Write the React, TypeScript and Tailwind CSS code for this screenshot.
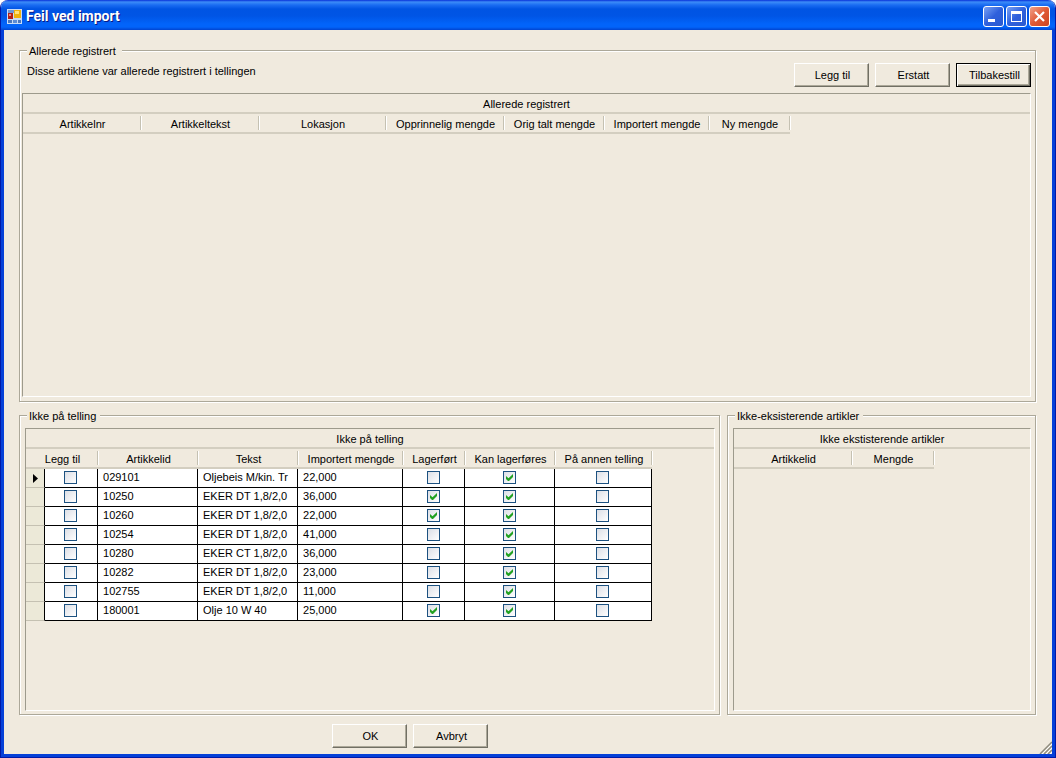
import type { ReactNode } from "react";

type Row = {
  id: string;
  tekst: string;
  mengde: string;
  lagerfort: boolean;
};

const rows: Row[] = [
  { id: "029101", tekst: "Oljebeis M/kin. Tr", mengde: "22,000", lagerfort: false },
  { id: "10250", tekst: "EKER DT 1,8/2,0", mengde: "36,000", lagerfort: true },
  { id: "10260", tekst: "EKER DT 1,8/2,0", mengde: "22,000", lagerfort: true },
  { id: "10254", tekst: "EKER DT 1,8/2,0", mengde: "41,000", lagerfort: false },
  { id: "10280", tekst: "EKER CT 1,8/2,0", mengde: "36,000", lagerfort: false },
  { id: "10282", tekst: "EKER DT 1,8/2,0", mengde: "23,000", lagerfort: false },
  { id: "102755", tekst: "EKER DT 1,8/2,0", mengde: "11,000", lagerfort: false },
  { id: "180001", tekst: "Olje 10 W 40", mengde: "25,000", lagerfort: true },
];

const Button = ({ children, focused = false }: { children: ReactNode; focused?: boolean }) => (
  <button
    type="button"
    className={
      focused
        ? "w-[75px] h-6 pl-0.5 border border-black text-center shadow-[inset_1px_1px_0_#fff,inset_-1px_-1px_0_#716f64,inset_-2px_-2px_0_#aca899]"
        : "w-[75px] h-6 pl-0.5 border border-t-white border-l-white border-r-[#716f64] border-b-[#716f64] text-center shadow-[inset_-1px_-1px_0_#aca899]"
    }
  >
    {children}
  </button>
);

const Group = ({ title, legendClass = "", className, children }: { title: string; legendClass?: string; className: string; children: ReactNode }) => (
  <fieldset className={`min-w-0 border border-[#aca899] shadow-[1px_1px_0_#fff,inset_1px_1px_0_#fff] ${className}`}>
    <legend className={`h-[15px] pt-0.5 leading-[13px] bg-[#f0eade] pl-0.5 pr-1 ${legendClass}`}>{title}</legend>
    {children}
  </fieldset>
);

const Grid = ({ title, className, children }: { title: string; className: string; children: ReactNode }) => (
  <div className={`overflow-hidden border border-t-[#9d9a8c] border-l-[#9d9a8c] border-r-white border-b-white ${className}`}>
    <div className="h-5 leading-5 text-center border-b-2 border-[#d3cec0]">{title}</div>
    {children}
  </div>
);

const Head = ({ children, span = 1 }: { children: ReactNode; span?: number }) => (
  <th colSpan={span} scope="col" className="h-5 p-0 font-normal border-b-2 border-[#d3cec0]">
    <div className="h-[14px] pl-0.5 leading-4 whitespace-nowrap border-r border-[#c5c1b2] shadow-[1px_0_0_#fff]">
      {children}
    </div>
  </th>
);

const Check = ({ label, checked = false }: { label: string; checked?: boolean }) => (
  <td className="h-[19px] p-0 pb-0.5 pr-px bg-white border-r border-b border-black">
    <label className="grid w-[13px] h-[13px] mx-auto">
      <input
        type="checkbox"
        defaultChecked={checked}
        aria-label={label}
        className="peer [grid-area:1/1] appearance-none w-[13px] h-[13px] border border-[#1c5180] bg-linear-to-br from-[#dcdfe6] to-white"
      />
      <svg viewBox="0 0 13 13" className="invisible peer-checked:visible pointer-events-none z-10 [grid-area:1/1] w-[13px] h-[13px]">
        <path d="M3 5v3l2 2h1l4-4V3L5.500 7.300z" fill="#21a121" />
      </svg>
    </label>
  </td>
);

const TextCell = ({ children }: { children: ReactNode }) => (
  <td className="h-[19px] p-0 pl-[5px] pb-0.5 leading-4 whitespace-nowrap overflow-hidden bg-white border-r border-b border-black">
    {children}
  </td>
);

const TitleBar = () => (
  <header className="h-[30px] pl-1.5 pr-[5px] pt-0.5 flex items-center bg-[linear-gradient(#0831d9_0px,#3c8cf8_2px,#1a6cf2_5px,#0054e3_9px,#0055e5_16px,#0264fa_24px,#0264fa_27px,#0144d0_30px)]">
    <svg viewBox="0 0 15 15" className="w-[15px] h-[15px]" aria-hidden="true">
      <rect x="0" y="0" width="15" height="15" fill="#c9dcf5" />
      <rect x="1" y="1" width="6" height="3" fill="#6f97d4" />
      <rect x="1" y="4" width="5" height="6" fill="#b31f17" />
      <rect x="2" y="5" width="2" height="2" fill="#ec8d79" />
      <rect x="7" y="1" width="7" height="8" fill="#f0b30d" />
      <rect x="8" y="2" width="4" height="3" fill="#ffe27c" />
      <rect x="1" y="11" width="4" height="3" fill="#4b77be" />
      <rect x="6" y="11" width="4" height="3" fill="#5c8cd4" />
      <rect x="11" y="11" width="3" height="3" fill="#4b77be" />
    </svg>
    <h1 className="ml-1 flex-1 font-['Roboto',sans-serif] text-[14px] leading-4 font-bold text-white [text-shadow:1px_1px_0_#0a1883]">
      Feil ved import
    </h1>
    <div className="flex gap-0.5">
      <button type="button" aria-label="Minimer" className="w-[21px] h-[21px] rounded-[3px] border border-white bg-linear-to-br from-[#7aa0f3] via-[#2f60dc] to-[#2a5ad0]">
        <svg viewBox="0 0 19 19" className="w-[19px] h-[19px]">
          <path d="M4 12h7v3H4z" fill="#fff" />
        </svg>
      </button>
      <button type="button" aria-label="Maksimer" className="w-[21px] h-[21px] rounded-[3px] border border-white bg-linear-to-br from-[#7aa0f3] via-[#2f60dc] to-[#2a5ad0]">
        <svg viewBox="0 0 19 19" className="w-[19px] h-[19px]">
          <path d="M4 4h11v11H4zM5 7v7h9V7z" fill="#fff" fillRule="evenodd" />
        </svg>
      </button>
      <button type="button" aria-label="Lukk" className="w-[21px] h-[21px] rounded-[3px] border border-white bg-linear-to-br from-[#f0a088] via-[#e05a35] to-[#cc4420]">
        <svg viewBox="0 0 19 19" className="w-[19px] h-[19px]">
          <path d="M5 5l9 9M14 5l-9 9" stroke="#fff" strokeWidth="2.200" />
        </svg>
      </button>
    </div>
  </header>
);

export default function App() {
  return (
    <div className="min-h-screen flex flex-col overflow-hidden rounded-t-lg border-x border-b border-[#0019a8] text-black text-[11px] font-['Liberation_Sans',Arial,sans-serif]">
      <TitleBar />

      <main className="relative flex-1 flex flex-col bg-[#f0eade] border-x-3 border-b-3 border-[#0540d8] pl-[15px] pr-4 pt-[13px] pb-1.5">
        <Group title="Allerede registrert" legendClass="ml-[5px] pr-1.5" className="flex-1 pl-0.5 pr-1 pb-1">
          <div className="flex items-start pt-[5px] pb-1.5">
            <p className="flex-1 pl-[5px] leading-4">Disse artiklene var allerede registrert i tellingen</p>
            <div className="flex gap-1.5">
              <Button>Legg til</Button>
              <Button>Erstatt</Button>
              <Button focused>Tilbakestill</Button>
            </div>
          </div>
          <Grid title="Allerede registrert" className="min-h-[304px]">
            <table aria-label="Allerede registrert" className="w-[767px] table-fixed border-separate border-spacing-0">
              <colgroup>
                <col className="w-[118px]" />
                <col className="w-[118px]" />
                <col className="w-[127px]" />
                <col className="w-[118px]" />
                <col className="w-[100px]" />
                <col className="w-[105px]" />
                <col className="w-[81px]" />
              </colgroup>
              <thead>
                <tr>
                  <Head>Artikkelnr</Head>
                  <Head>Artikkeltekst</Head>
                  <Head>Lokasjon</Head>
                  <Head>Opprinnelig mengde</Head>
                  <Head>Orig talt mengde</Head>
                  <Head>Importert mengde</Head>
                  <Head>Ny mengde</Head>
                </tr>
              </thead>
            </table>
          </Grid>
        </Group>

        <div className="flex gap-[7px] mt-1.5">
          <Group title="Ikke på telling" legendClass="ml-0.5" className="flex-1 pl-[5px] pr-1 pt-[5px] pb-[3px]">
            <Grid title="Ikke på telling" className="min-h-[283px]">
              <table aria-label="Ikke på telling" className="w-[626px] table-fixed border-separate border-spacing-0">
                <colgroup>
                  <col className="w-[19px]" />
                  <col className="w-[53px]" />
                  <col className="w-[100px]" />
                  <col className="w-[100px]" />
                  <col className="w-[105px]" />
                  <col className="w-[62px]" />
                  <col className="w-[90px]" />
                  <col className="w-[97px]" />
                </colgroup>
                <thead>
                  <tr>
                    <Head span={2}>Legg til</Head>
                    <Head>Artikkelid</Head>
                    <Head>Tekst</Head>
                    <Head>Importert mengde</Head>
                    <Head>Lagerført</Head>
                    <Head>Kan lagerføres</Head>
                    <Head>På annen telling</Head>
                  </tr>
                </thead>
                <tbody>
                  {rows.map((row, i) => (
                    <tr key={row.id}>
                      <td className="h-[19px] p-0 bg-[#ece9d8] border-r border-r-black border-b border-b-[#c5c1b2]">
                        {i === 0 && (
                          <svg viewBox="0 0 5 9" className="block w-[5px] h-[9px] ml-[7px]" aria-label="Gjeldende rad">
                            <path d="M0 0l5 4.500L0 9z" />
                          </svg>
                        )}
                      </td>
                      <Check label={`Legg til ${row.id}`} />
                      <TextCell>{row.id}</TextCell>
                      <TextCell>{row.tekst}</TextCell>
                      <TextCell>{row.mengde}</TextCell>
                      <Check label={`Lagerført ${row.id}`} checked={row.lagerfort} />
                      <Check label={`Kan lagerføres ${row.id}`} checked />
                      <Check label={`På annen telling ${row.id}`} />
                    </tr>
                  ))}
                </tbody>
              </table>
            </Grid>
          </Group>

          <Group title="Ikke-eksisterende artikler" legendClass="ml-0.5" className="w-[309px] pl-[5px] pr-1 pt-[5px] pb-[3px]">
            <Grid title="Ikke ekstisterende artikler" className="min-h-[283px]">
              <table aria-label="Ikke ekstisterende artikler" className="w-[200px] table-fixed border-separate border-spacing-0">
                <colgroup>
                  <col className="w-[118px]" />
                  <col className="w-[82px]" />
                </colgroup>
                <thead>
                  <tr>
                    <Head>Artikkelid</Head>
                    <Head>Mengde</Head>
                  </tr>
                </thead>
              </table>
            </Grid>
          </Group>
        </div>

        <div className="flex gap-1.5 mt-[9px] pl-[313px]">
          <Button>OK</Button>
          <Button>Avbryt</Button>
        </div>

        {/* resize grip */}
        <svg viewBox="0 0 13 13" className="absolute right-0 bottom-0 w-[13px] h-[13px]" aria-hidden="true">
          <path d="M1 13L13 1M5 13l8-8M9 13l4-4" stroke="#8f8c7e" strokeWidth="1.500" />
          <path d="M3 13L13 3M7 13l6-6M11 13l2-2" stroke="#fff" />
        </svg>
      </main>
    </div>
  );
}
